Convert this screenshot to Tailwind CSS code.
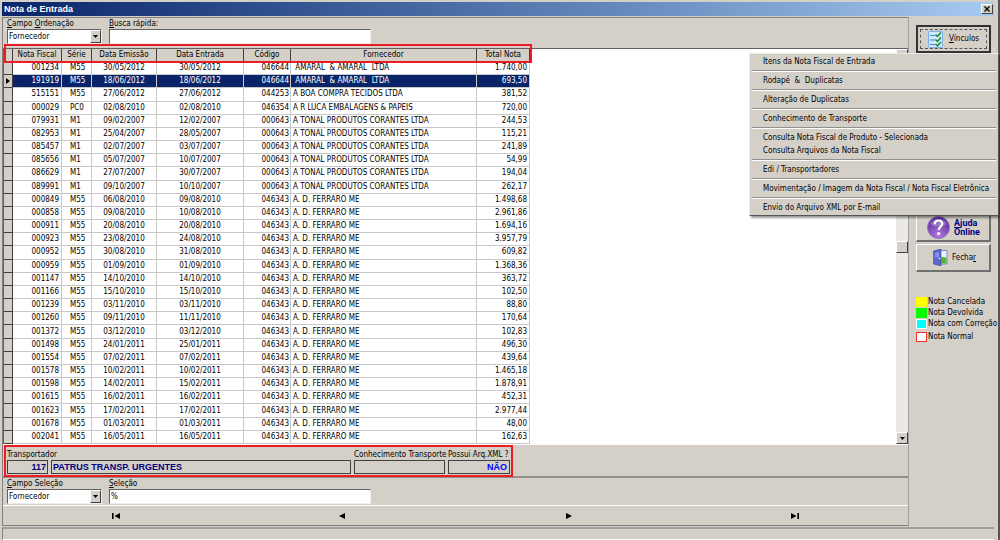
<!doctype html>
<html lang="pt-BR">

<head>
  <title>Nota de Entrada</title>
  <meta charset="utf-8" />
  <meta name="viewport" content="width=device-width, initial-scale=1" />
  <script src="https://cdn.jsdelivr.net/npm/@tailwindcss/browser@4"></script>
</head>

<body class="bg-[#d4d0c8] font-['DejaVu_Sans_Condensed','Liberation_Sans',sans-serif] text-[8px] leading-[10px] text-black">
  <div class="relative flex flex-col min-h-screen pt-0.5 pl-0.5 pr-1 border-r-2 border-r-[#555]">
    <header class="flex items-center justify-between h-[14px] pl-0.5 pr-px bg-linear-to-r from-[#0a246a] to-[#a6caf0]">
      <h1 class="font-['Liberation_Sans',sans-serif] text-[9px] font-bold text-white">Nota de Entrada</h1>
      <button class="flex items-center justify-center w-3 h-[10px] bg-[#d4d0c8] border border-t-white border-l-white border-r-[#404040] border-b-[#404040]" type="button" aria-label="Fechar janela">
        <svg class="w-[6px] h-[6px]" viewBox="0 0 6 6"><path d="M.5.5l5 5M5.5.5l-5 5" stroke="#000" stroke-width="1.4" /></svg>
      </button>
    </header>

    <div class="flex flex-1 mt-px">
      <main class="flex flex-col flex-1 min-w-0 border border-t-[#808080] border-l-[#808080] border-r-[#a0a0a0] border-b-[#808080]">
        <!-- ordenação -->
        <div class="flex gap-[7px] h-[30px] pt-px pl-1">
          <div class="flex flex-col w-[95px]">
            <label for="ordem"><u>C</u>ampo <u>O</u>rdenação</label>
            <div class="relative">
              <select id="ordem" class="block w-full h-[15px] pl-px appearance-none bg-white border border-t-[#606060] border-l-[#606060] border-r-[#eee] border-b-[#eee]">
                <option>Fornecedor</option>
              </select>
              <span class="absolute right-px top-px flex items-center justify-center w-[11px] h-[13px] bg-[#d4d0c8] border border-t-white border-l-white border-r-[#404040] border-b-[#404040] pointer-events-none">
                <svg class="w-[5px] h-[3px]" viewBox="0 0 5 3"><path d="M0 0h5L2.5 3z" /></svg>
              </span>
            </div>
          </div>
          <div class="flex flex-col w-[262px]">
            <label for="busca"><u>B</u>usca rápida:</label>
            <input id="busca" class="h-[15px] px-0.5 bg-white border border-t-[#606060] border-l-[#606060] border-r-[#eee] border-b-[#eee]" type="text" />
          </div>
        </div>

        <!-- grade -->
        <div class="relative flex flex-1 bg-white border-t border-l border-[#606060]">
          <div class="flex-1">
            <table class="table-fixed w-[526px] h-[395px] border-separate border-spacing-0">
              <colgroup>
                <col class="w-[9px]" />
                <col class="w-[49px]" />
                <col class="w-[30px]" />
                <col class="w-[65px]" />
                <col class="w-[87px]" />
                <col class="w-[47px]" />
                <col class="w-[186px]" />
                <col class="w-[53px]" />
              </colgroup>
              <thead class="bg-[#d4d0c8] whitespace-nowrap">
                <tr class="h-[13px]">
                  <th class="p-0 border-r border-b border-[#404040]"></th>
                  <th class="p-0 font-normal border-r border-b border-[#404040]">Nota Fiscal</th>
                  <th class="p-0 font-normal border-r border-b border-[#404040]">Série</th>
                  <th class="p-0 font-normal border-r border-b border-[#404040]">Data Emissão</th>
                  <th class="p-0 font-normal border-r border-b border-[#404040]">Data Entrada</th>
                  <th class="p-0 font-normal border-r border-b border-[#404040]">Código</th>
                  <th class="p-0 font-normal border-r border-b border-[#404040]">Fornecedor</th>
                  <th class="p-0 font-normal border-r border-b border-[#404040]">Total Nota</th>
                </tr>
              </thead>
              <tbody id="js-notas"></tbody>
            </table>
          </div>
          <div class="flex flex-col w-3 bg-[#ebe9e4]">
            <button class="flex items-center justify-center h-3 bg-[#d4d0c8] border border-t-white border-l-white border-r-[#404040] border-b-[#404040]" type="button" aria-label="Subir">
              <svg class="w-[5px] h-[3px]" viewBox="0 0 5 3"><path d="M0 3h5L2.5 0z" /></svg>
            </button>
            <div class="flex-1 pt-[180px]">
              <div class="h-3 bg-[#d4d0c8] border border-t-white border-l-white border-r-[#404040] border-b-[#404040]"></div>
            </div>
            <button class="flex items-center justify-center h-3 bg-[#d4d0c8] border border-t-white border-l-white border-r-[#404040] border-b-[#404040]" type="button" aria-label="Descer">
              <svg class="w-[5px] h-[3px]" viewBox="0 0 5 3"><path d="M0 0h5L2.5 3z" /></svg>
            </button>
          </div>
          <div class="absolute -top-[5px] left-0 w-[528px] h-[19px] border-2 border-[#ed1c24] pointer-events-none"></div>
        </div>

        <!-- transportador -->
        <div class="flex border-t border-t-white border-b-2 border-b-[#909090]">
          <div class="flex gap-[3px] h-8 pt-[3px] px-px ml-px -mb-px border-2 border-[#ed1c24]">
            <div class="w-[41px]">
              <label class="block whitespace-nowrap" for="transp">Transportador</label>
              <input id="transp" class="block w-full h-[14px] px-px text-right font-['Liberation_Sans',sans-serif] text-[9px] font-bold text-[#000080] border border-[#404040]" type="text" value="117" readonly />
            </div>
            <div class="w-[300px] pt-[10px]">
              <input aria-label="Nome do transportador" class="block w-full h-[14px] px-px font-['Liberation_Sans',sans-serif] text-[9px] font-bold text-[#000080] border border-[#404040]" type="text" value="PATRUS TRANSP. URGENTES" readonly />
            </div>
            <div class="w-[91px]">
              <label class="block whitespace-nowrap" for="conhec">Conhecimento Transporte</label>
              <input id="conhec" class="block w-full h-[14px] px-px border border-[#404040]" type="text" readonly />
            </div>
            <div class="w-[62px]">
              <label class="block whitespace-nowrap" for="xml">Possui Arq.XML ?</label>
              <input id="xml" class="block w-full h-[14px] px-0.5 text-right font-['Liberation_Sans',sans-serif] text-[9px] font-bold text-[#0000ff] border border-[#404040]" type="text" value="NÃO" readonly />
            </div>
          </div>
        </div>

        <!-- seleção -->
        <div class="flex gap-[7px] h-[27px] pt-px pl-1">
          <div class="flex flex-col w-[95px]">
            <label for="selecao"><u>C</u>ampo Seleção</label>
            <div class="relative">
              <select id="selecao" class="block w-full h-[15px] pl-px appearance-none bg-white border border-t-[#606060] border-l-[#606060] border-r-[#eee] border-b-[#eee]">
                <option>Fornecedor</option>
              </select>
              <span class="absolute right-px top-px flex items-center justify-center w-[11px] h-[13px] bg-[#d4d0c8] border border-t-white border-l-white border-r-[#404040] border-b-[#404040] pointer-events-none">
                <svg class="w-[5px] h-[3px]" viewBox="0 0 5 3"><path d="M0 0h5L2.5 3z" /></svg>
              </span>
            </div>
          </div>
          <div class="flex flex-col w-[262px]">
            <label for="valor"><u>S</u>eleção</label>
            <input id="valor" class="h-[15px] px-px bg-white border border-t-[#606060] border-l-[#606060] border-r-[#eee] border-b-[#eee]" type="text" value="%" />
          </div>
        </div>

        <!-- navegação -->
        <nav class="grid grid-cols-4 h-5 border-t border-t-white">
          <button class="flex items-center justify-center" type="button" aria-label="Primeiro">
            <svg class="w-2 h-[6px]" viewBox="0 0 8 6"><path d="M0 0h1.6v6H0zM8 0v6L2.5 3z" /></svg>
          </button>
          <button class="flex items-center justify-center" type="button" aria-label="Anterior">
            <svg class="w-[6px] h-[6px]" viewBox="0 0 6 6"><path d="M6 0v6L0 3z" /></svg>
          </button>
          <button class="flex items-center justify-center" type="button" aria-label="Próximo">
            <svg class="w-[6px] h-[6px]" viewBox="0 0 6 6"><path d="M0 0v6l6-3z" /></svg>
          </button>
          <button class="flex items-center justify-center" type="button" aria-label="Último">
            <svg class="w-2 h-[6px]" viewBox="0 0 8 6"><path d="M0 0v6l5.500-3zM6.400 0H8v6H6.400z" /></svg>
          </button>
        </nav>
      </main>

      <aside class="flex flex-col w-[85px] pt-2 pl-[7px] pr-[3px]">
        <button class="p-0.5 h-7 border-2 border-[#333]" type="button">
          <span class="flex items-center justify-center gap-1.5 h-full border border-dashed border-[#555]">
            <svg class="w-[15px] h-[17px]" viewBox="0 0 15 17">
              <rect x=".5" y=".5" width="14" height="16" rx="1" fill="#d3e8ff" stroke="#79aeea" />
              <path d="M2 4.500h5M2 9h5M2 13.500h5" stroke="#3f83d6" />
              <path d="M7.500 3.500l2 2L13 1.500M7.500 8.500l2 2L13 6.500M7.500 13l2 2L13 11" fill="none" stroke="#118c22" stroke-width="1.500" />
            </svg>
            <span><u>V</u>ínculos</span>
          </span>
        </button>
        <button class="flex items-center gap-1 h-7 mt-[161px] pl-2.5 border border-t-white border-l-white border-r-2 border-b-2 border-r-[#707070] border-b-[#707070] text-left font-['Roboto',sans-serif] font-bold text-[#000080] text-[9px] leading-[9px]" type="button">
          <svg class="w-[23px] h-[23px]" viewBox="0 0 23 23">
            <defs>
              <radialGradient id="roxo" cx=".5" cy=".85" r=".8">
                <stop offset="0" stop-color="#b07ae0" />
                <stop offset="1" stop-color="#5b2a9c" />
              </radialGradient>
            </defs>
            <circle cx="11.500" cy="11.500" r="11" fill="url(#roxo)" stroke="#8e79b8" />
            <path d="M3 8a9 7 0 0 1 17 0q-8 5-17 0z" fill="#fff" opacity=".25" />
            <path d="M7.800 8.200c0-5 7.500-4.700 7.500-.6 0 3-3.500 3-3.500 6.400" fill="none" stroke="#fff" stroke-width="2.200" />
            <circle cx="11.700" cy="17.500" r="1.500" fill="#fff" />
          </svg>
          <span><u>A</u>juda<br />Online</span>
        </button>
        <button class="flex items-center gap-1 h-7 mt-0.5 pl-4 border border-t-white border-l-white border-r-2 border-b-2 border-r-[#707070] border-b-[#707070]" type="button">
          <svg class="w-[15px] h-[17px]" viewBox="0 0 15 17">
            <path d="M6 1.500h8v13.500H6z" fill="#e6f3ff" stroke="#7b8fb8" />
            <path d="M7 9q3-2 6.500 0v5.500H7z" fill="#57b82e" />
            <path d="M.5 2L8 0v17L.5 15z" fill="#5b66cf" stroke="#3d4499" stroke-width=".6" />
            <path d="M2 4l4-1v5l-4 .5z" fill="#8790e6" />
            <circle cx="6.500" cy="9.500" r=".8" fill="#fff" />
          </svg>
          <span>Fecha<u>r</u></span>
        </button>

        <ul class="flex flex-col mt-6">
          <li class="flex items-center gap-px h-[11px] whitespace-nowrap"><span class="w-[11px] h-[10px] shrink-0 bg-[#ffff00]"></span>Nota Cancelada</li>
          <li class="flex items-center gap-px h-[11px] whitespace-nowrap"><span class="w-[11px] h-[10px] shrink-0 bg-[#00ff00]"></span>Nota Devolvida</li>
          <li class="flex items-center gap-px h-[11px] whitespace-nowrap"><span class="w-[11px] h-[10px] shrink-0 bg-[#00ffff] border border-white"></span>Nota com Correção</li>
          <li class="flex items-center gap-px h-[11px] mt-0.5 whitespace-nowrap"><span class="w-[11px] h-[10px] shrink-0 bg-white border border-[#ff3030]"></span>Nota Normal</li>
        </ul>
      </aside>
    </div>

    <footer class="h-[13px] mt-px border-t-2 border-t-[#a0a0a0] border-l border-l-[#808080] border-b border-b-white"></footer>

    <!-- menu do botão Vínculos -->
    <div class="absolute top-[53px] right-[-1px] w-[250px] pt-px px-0.5 pb-px bg-[#d4d0c8] border border-t-[#eceae6] border-l-[#eceae6] border-r-[#555] border-b-[#555] shadow-[2px_2px_2px_#0006]" role="menu">
      <button class="block w-full h-[13px] pl-[11px] text-left whitespace-pre" type="button" role="menuitem">Itens da Nota Fiscal de Entrada</button>
      <hr class="my-0.5 h-0.5 border-t-[#909090] border-b border-b-white" />
      <button class="block w-full h-[13px] pl-[11px] text-left whitespace-pre" type="button" role="menuitem">Rodapé  &amp;  Duplicatas</button>
      <hr class="my-0.5 h-0.5 border-t-[#909090] border-b border-b-white" />
      <button class="block w-full h-[13px] pl-[11px] text-left whitespace-pre" type="button" role="menuitem">Alteração de Duplicatas</button>
      <hr class="my-0.5 h-0.5 border-t-[#909090] border-b border-b-white" />
      <button class="block w-full h-[13px] pl-[11px] text-left whitespace-pre" type="button" role="menuitem">Conhecimento de Transporte</button>
      <hr class="my-0.5 h-0.5 border-t-[#909090] border-b border-b-white" />
      <button class="block w-full h-[13px] pl-[11px] text-left whitespace-pre" type="button" role="menuitem">Consulta Nota Fiscal de Produto - Selecionada</button>
      <button class="block w-full h-[13px] pl-[11px] text-left whitespace-pre" type="button" role="menuitem">Consulta Arquivos da Nota Fiscal</button>
      <hr class="my-0.5 h-0.5 border-t-[#909090] border-b border-b-white" />
      <button class="block w-full h-[13px] pl-[11px] text-left whitespace-pre" type="button" role="menuitem">Edi / Transportadores</button>
      <hr class="my-0.5 h-0.5 border-t-[#909090] border-b border-b-white" />
      <button class="block w-full h-[13px] pl-[11px] text-left whitespace-pre" type="button" role="menuitem">Movimentação / Imagem da Nota Fiscal / Nota Fiscal Eletrônica</button>
      <hr class="my-0.5 h-0.5 border-t-[#909090] border-b border-b-white" />
      <button class="block w-full h-[13px] pl-[11px] text-left whitespace-pre" type="button" role="menuitem">Envio do Arquivo XML por E-mail</button>
    </div>
  </div>

  <script>
    const notas = [
      ['001234', 'M55', '30/05/2012', '30/05/2012', '046644', ' AMARAL  & AMARAL  LTDA', '1.740,00'],
      ['191919', 'M55', '18/06/2012', '18/06/2012', '046644', ' AMARAL  & AMARAL  LTDA', '693,50'],
      ['515151', 'M55', '27/06/2012', '27/06/2012', '044253', 'A BOA COMPRA TECIDOS LTDA', '381,52'],
      ['000029', 'PC0', '02/08/2010', '02/08/2010', '046354', 'A R LUCA EMBALAGENS & PAPEIS', '720,00'],
      ['079931', 'M1', '09/02/2007', '12/02/2007', '000643', 'A TONAL PRODUTOS CORANTES LTDA', '244,53'],
      ['082953', 'M1', '25/04/2007', '28/05/2007', '000643', 'A TONAL PRODUTOS CORANTES LTDA', '115,21'],
      ['085457', 'M1', '02/07/2007', '03/07/2007', '000643', 'A TONAL PRODUTOS CORANTES LTDA', '241,89'],
      ['085656', 'M1', '05/07/2007', '10/07/2007', '000643', 'A TONAL PRODUTOS CORANTES LTDA', '54,99'],
      ['086629', 'M1', '27/07/2007', '30/07/2007', '000643', 'A TONAL PRODUTOS CORANTES LTDA', '194,04'],
      ['089991', 'M1', '09/10/2007', '10/10/2007', '000643', 'A TONAL PRODUTOS CORANTES LTDA', '262,17'],
      ['000849', 'M55', '06/08/2010', '09/08/2010', '046343', 'A. D. FERRARO ME', '1.498,68'],
      ['000858', 'M55', '09/08/2010', '10/08/2010', '046343', 'A. D. FERRARO ME', '2.961,86'],
      ['000911', 'M55', '20/08/2010', '20/08/2010', '046343', 'A. D. FERRARO ME', '1.694,16'],
      ['000923', 'M55', '23/08/2010', '24/08/2010', '046343', 'A. D. FERRARO ME', '3.957,79'],
      ['000952', 'M55', '30/08/2010', '31/08/2010', '046343', 'A. D. FERRARO ME', '609,82'],
      ['000959', 'M55', '01/09/2010', '01/09/2010', '046343', 'A. D. FERRARO ME', '1.368,36'],
      ['001147', 'M55', '14/10/2010', '14/10/2010', '046343', 'A. D. FERRARO ME', '363,72'],
      ['001166', 'M55', '15/10/2010', '15/10/2010', '046343', 'A. D. FERRARO ME', '102,50'],
      ['001239', 'M55', '03/11/2010', '03/11/2010', '046343', 'A. D. FERRARO ME', '88,80'],
      ['001260', 'M55', '09/11/2010', '11/11/2010', '046343', 'A. D. FERRARO ME', '170,64'],
      ['001372', 'M55', '03/12/2010', '03/12/2010', '046343', 'A. D. FERRARO ME', '102,83'],
      ['001498', 'M55', '24/01/2011', '25/01/2011', '046343', 'A. D. FERRARO ME', '496,30'],
      ['001554', 'M55', '07/02/2011', '07/02/2011', '046343', 'A. D. FERRARO ME', '439,64'],
      ['001578', 'M55', '10/02/2011', '10/02/2011', '046343', 'A. D. FERRARO ME', '1.465,18'],
      ['001598', 'M55', '14/02/2011', '15/02/2011', '046343', 'A. D. FERRARO ME', '1.878,91'],
      ['001615', 'M55', '16/02/2011', '16/02/2011', '046343', 'A. D. FERRARO ME', '452,31'],
      ['001623', 'M55', '17/02/2011', '17/02/2011', '046343', 'A. D. FERRARO ME', '2.977,44'],
      ['001678', 'M55', '01/03/2011', '01/03/2011', '046343', 'A. D. FERRARO ME', '48,00'],
      ['002041', 'M55', '16/05/2011', '16/05/2011', '046343', 'A. D. FERRARO ME', '162,63'],
    ];
    const colunas = [
      'p-0 pr-0.5 text-right border-r border-b border-[#c8c8c8]',
      'p-0 pl-2 text-left border-r border-b border-[#c8c8c8]',
      'p-0 text-center border-r border-b border-[#c8c8c8]',
      'p-0 text-center border-r border-b border-[#c8c8c8]',
      'p-0 pr-px text-right border-r border-b border-[#c8c8c8]',
      'p-0 pl-0.5 text-left whitespace-pre border-r border-b border-[#c8c8c8]',
      'p-0 pr-0.5 text-right border-r border-b border-[#c8c8c8]',
    ];
    const seta = '<svg class="w-1 h-[6px] ml-0.5" viewBox="0 0 4 6"><path d="M0 0v6l4-3z" /></svg>';

    document.getElementById('js-notas').innerHTML = notas.map((nota, i) => {
      const selecionada = i === 1;
      const celulas = nota.map((valor, c) => `<td class="${colunas[c]}">${valor.replace('&', '&amp;')}</td>`).join('');
      return `<tr class="${selecionada ? 'bg-[#0a246a] text-white' : 'bg-white'}">
        <td class="p-0 bg-[#d4d0c8] border-r border-b border-[#404040]">${selecionada ? seta : ''}</td>${celulas}</tr>`;
    }).join('');
  </script>
</body>

</html>
